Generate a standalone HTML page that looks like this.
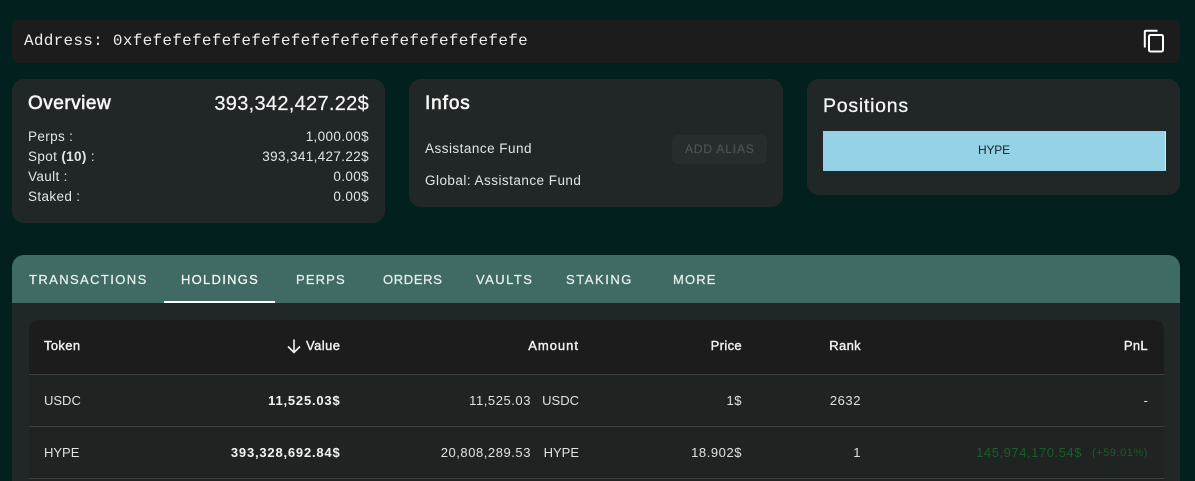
<!DOCTYPE html>
<html><head><meta charset="utf-8">
<style>
html,body{margin:0;padding:0;width:1195px;height:481px;overflow:hidden;background:#02201d;}
body{position:relative;font-family:"Liberation Sans",sans-serif;color:#fff;}
.b{position:absolute;box-sizing:border-box;}
.t{position:absolute;white-space:nowrap;line-height:20px;font-size:13px;color:#e6e8e8;}
.r{text-align:right;}
.h{font-size:19px;line-height:24px;font-weight:400;-webkit-text-stroke:.6px #f5f6f6;color:#f5f6f6;letter-spacing:.45px;}
.s{font-size:13.5px;color:#e2e5e5;letter-spacing:.36px;}
.tab{font-size:13px;font-weight:400;letter-spacing:1.15px;color:#e8eeec;top:270px;-webkit-text-stroke:.25px #e8eeec;}
.th{font-size:13px;font-weight:400;-webkit-text-stroke:.4px #f0f1f1;color:#f0f1f1;top:336px;letter-spacing:.35px;}
.td{font-size:13px;color:#dfe2e2;}
.n{letter-spacing:.55px;}
.bold{font-weight:700;color:#f2f3f3;letter-spacing:.8px;}
.line{position:absolute;left:29px;width:1135px;height:1px;background:#3a3f3f;}
</style></head><body>

<div class="b" style="left:12px;top:20px;width:1168px;height:43px;background:#1b1c1b;border-radius:6px;"></div>
<div class="t" style="left:24px;top:31px;font-family:'Liberation Mono',monospace;font-size:16px;letter-spacing:.28px;color:#eceeee;">Address: 0xfefefefefefefefefefefefefefefefefefefefe</div>
<svg class="b" style="left:1142px;top:28px;" width="24" height="26" viewBox="0 0 24 26" fill="none" stroke="#fff" stroke-width="2"><path d="M2.800 19.500V4Q2.800 2.800 4 2.800H15.500"/><rect x="7" y="7" width="14" height="16.500" rx="1.500"/></svg>

<div class="b" style="left:12px;top:79px;width:373px;height:144px;background:#212726;border-radius:12px;"></div>
<div class="t h" style="left:28px;top:92px;letter-spacing:.5px;">Overview</div>
<div class="t h r" style="right:826px;top:92px;font-size:20px;letter-spacing:.3px;-webkit-text-stroke:.2px #f5f6f6;">393,342,427.22$</div>
<div class="t s" style="left:28px;top:127px;">Perps :</div>
<div class="t s r" style="right:826px;top:127px;">1,000.00$</div>
<div class="t s" style="left:28px;top:147px;">Spot <b>(10)</b> :</div>
<div class="t s r" style="right:826px;top:147px;">393,341,427.22$</div>
<div class="t s" style="left:28px;top:167px;">Vault :</div>
<div class="t s r" style="right:826px;top:167px;">0.00$</div>
<div class="t s" style="left:28px;top:187px;">Staked :</div>
<div class="t s r" style="right:826px;top:187px;">0.00$</div>

<div class="b" style="left:409px;top:79px;width:374px;height:128px;background:#212726;border-radius:12px;"></div>
<div class="t h" style="left:425px;top:92px;letter-spacing:.9px;">Infos</div>
<div class="t s" style="left:425px;top:139px;letter-spacing:.48px;">Assistance Fund</div>
<div class="t s" style="left:425px;top:171px;letter-spacing:.47px;">Global: Assistance Fund</div>
<div class="b" style="left:672px;top:135px;width:95px;height:29px;background:#262d2c;border-radius:5px;"></div>
<div class="t" style="left:685px;top:139px;font-size:12px;font-weight:400;-webkit-text-stroke:.25px #4a5352;letter-spacing:.85px;color:#4a5352;">ADD ALIAS</div>

<div class="b" style="left:807px;top:79px;width:373px;height:116px;background:#212726;border-radius:12px;"></div>
<div class="t h" style="left:823px;top:94px;font-size:19.5px;letter-spacing:.75px;-webkit-text-stroke:.3px #f5f6f6;">Positions</div>
<div class="b" style="left:823px;top:131px;width:343px;height:40px;background:#96d2e5;"></div>
<div class="b" style="left:1165px;top:132px;width:1px;height:38px;background:#e4edd0;"></div>
<div class="t" style="left:978px;top:140px;font-size:12px;letter-spacing:-.2px;color:#10252c;">HYPE</div>

<div class="b" style="left:12px;top:255px;width:1168px;height:226px;background:#212726;border-radius:12px 12px 0 0;"></div>
<div class="b" style="left:12px;top:255px;width:1168px;height:48px;background:#406b64;border-radius:12px 12px 0 0;"></div>
<div class="t tab" style="left:29px;letter-spacing:1.4px;">TRANSACTIONS</div>
<div class="t tab" style="left:181px;letter-spacing:1.27px;color:#fff;">HOLDINGS</div>
<div class="t tab" style="left:296px;">PERPS</div>
<div class="t tab" style="left:383px;letter-spacing:.65px;">ORDERS</div>
<div class="t tab" style="left:476px;letter-spacing:1.45px;">VAULTS</div>
<div class="t tab" style="left:566px;letter-spacing:1.55px;">STAKING</div>
<div class="t tab" style="left:673px;">MORE</div>
<div class="b" style="left:164px;top:301px;width:111px;height:2px;background:#fff;"></div>

<div class="b" style="left:29px;top:320px;width:1135px;height:161px;background:#1f2322;border-radius:10px 10px 0 0;"></div>
<div class="b" style="left:29px;top:320px;width:1135px;height:54px;background:#1c1c1c;border-radius:10px 10px 0 0;"></div>
<div class="line" style="top:374px;"></div>
<div class="line" style="top:426px;"></div>
<div class="line" style="top:478px;"></div>

<div class="t th" style="left:44px;">Token</div>
<svg class="b" style="left:286px;top:338px;" width="16" height="16" viewBox="0 0 16 16" fill="none" stroke="#f0f1f1" stroke-width="1.600"><path d="M8 1.500V14.500M2 8.500L8 14.500L14 8.500"/></svg>
<div class="t th r" style="right:854.500px;letter-spacing:.45px;">Value</div>
<div class="t th r" style="right:616px;letter-spacing:1px;">Amount</div>
<div class="t th r" style="right:453px;">Price</div>
<div class="t th r" style="right:334px;">Rank</div>
<div class="t th r" style="right:47px;">PnL</div>

<div class="t td" style="left:44px;top:391px;">USDC</div>
<div class="t td r bold" style="right:854.500px;top:391px;">11,525.03$</div>
<div class="t td r n" style="right:664px;top:391px;">11,525.03</div>
<div class="t td r" style="right:616px;top:391px;">USDC</div>
<div class="t td r n" style="right:453px;top:391px;">1$</div>
<div class="t td r n" style="right:334px;top:391px;">2632</div>
<div class="t td r" style="right:47px;top:391px;">-</div>

<div class="t td" style="left:44px;top:443px;">HYPE</div>
<div class="t td r bold" style="right:854.500px;top:443px;">393,328,692.84$</div>
<div class="t td r n" style="right:664px;top:443px;">20,808,289.53</div>
<div class="t td r" style="right:616px;top:443px;">HYPE</div>
<div class="t td r n" style="right:453px;top:443px;">18.902$</div>
<div class="t td r n" style="right:334px;top:443px;">1</div>
<div class="t td r n" style="right:113px;top:443px;color:#1b5e26;">145,974,170.54$</div>
<div class="t td r n" style="right:47px;top:443px;font-size:11px;color:#1f5a2a;">(+59.01%)</div>

</body></html>
